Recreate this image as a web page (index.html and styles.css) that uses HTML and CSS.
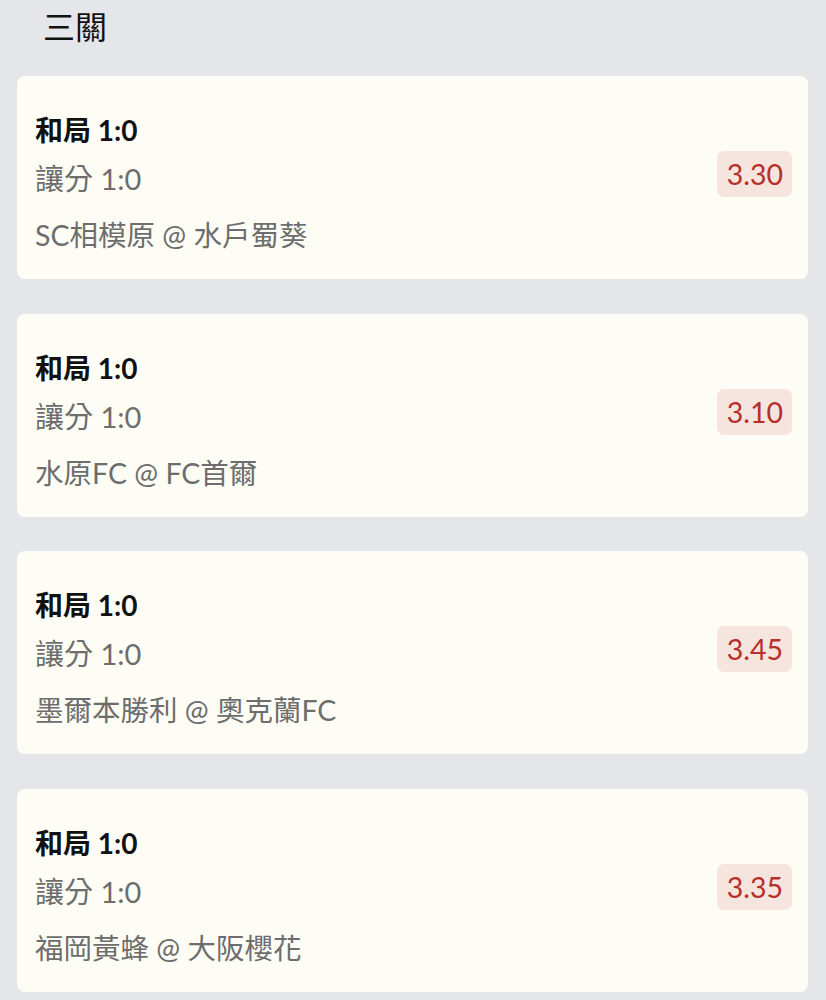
FILE: index.html
```html
<!DOCTYPE html>
<html>
	<head>
		<title>三關</title>
		<link rel="stylesheet" href="styles.css">
	</head>
	<body>
		<h1 class="title">三關</h1>

		<div class="card">
			<div class="info">
				<div class="pick">和局 1:0</div>
				<div class="market">讓分 1:0</div>
				<div class="match">SC相模原 @ 水戶蜀葵</div>
			</div>
			<div class="odds">3.30</div>
		</div>

		<div class="card">
			<div class="info">
				<div class="pick">和局 1:0</div>
				<div class="market">讓分 1:0</div>
				<div class="match">水原FC @ FC首爾</div>
			</div>
			<div class="odds">3.10</div>
		</div>

		<div class="card">
			<div class="info">
				<div class="pick">和局 1:0</div>
				<div class="market">讓分 1:0</div>
				<div class="match">墨爾本勝利 @ 奧克蘭FC</div>
			</div>
			<div class="odds">3.45</div>
		</div>

		<div class="card">
			<div class="info">
				<div class="pick">和局 1:0</div>
				<div class="market">讓分 1:0</div>
				<div class="match">福岡黃蜂 @ 大阪櫻花</div>
			</div>
			<div class="odds">3.35</div>
		</div>
	</body>
</html>
```

FILE: styles.css
```css
body {
	margin: 0;
	padding: 0 18px 0 17px;
	background: #e5e6ea;
	font-family: Lato, "Noto Sans CJK TC", sans-serif;
	color: #111;
}
.title {
	margin: 0;
	padding-left: 26px;
	height: 76px;
	line-height: 54px;
	font-size: 32px;
	font-weight: normal;
}
.card {
	box-sizing: border-box;
	height: 203px;
	display: flex;
	align-items: center;
	justify-content: space-between;
	background: #fefdf5;
	border-radius: 8px;
	padding: 30px 16px 19px 18px;
	margin-bottom: 34.5px;
}
.pick {
	height: 48px;
	font-size: 28px;
	font-weight: bold;
	line-height: 48px;
}
.market {
	height: 50px;
	font-size: 29px;
	line-height: 50px;
	color: #6d6d6d;
}
.match {
	height: 50px;
	font-size: 28.5px;
	line-height: 50px;
	margin-top: 6px;
	color: #6d6d6d;
}
.odds {
	background: #f6e5df;
	color: #b5302a;
	font-size: 28.5px;
	line-height: 46px;
	padding: 0 9px 0 10px;
	border-radius: 7px;
	margin-bottom: 18px;
}
```
